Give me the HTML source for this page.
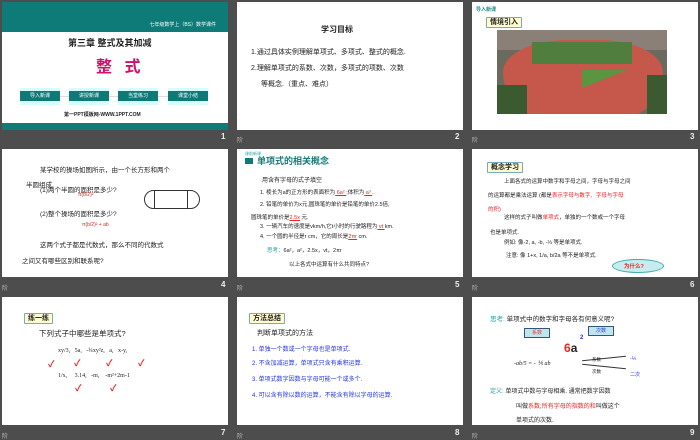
<!DOCTYPE html>
<html><head><meta charset="utf-8"><style>
*{margin:0;padding:0;box-sizing:border-box}
body{width:700px;height:438px;background:#4d4d4d;position:relative;overflow:hidden;font-family:"Liberation Sans","Noto Sans CJK SC",sans-serif;color:#222}
.s{position:absolute;width:226px;height:128px;background:#fff;overflow:hidden}
.a{position:absolute;white-space:nowrap}
.n{position:absolute;color:#eee;font-size:8px;font-weight:bold}
.ic{position:absolute;color:#bbb;font-size:6px}
.tag{position:absolute;border:1px solid #7ab;background:#eef6ff;font-size:7px;font-weight:bold;padding:0 3px;line-height:9px;border-radius:1px}
.r{color:#e22}.b{color:#2233dd}.t{color:#2a9fa0}
.btn{position:absolute;top:86px;width:40px;height:17px;background:#d8fbfb}
.btn span{position:absolute;left:0;top:3px;width:40px;height:10px;background:#0e7a77;color:#fff;font-size:5px;text-align:center;line-height:10px}
</style></head><body>

<!-- slide 1 -->
<div class="s" style="left:2px;top:2px">
 <div class="a" style="left:0;top:0;width:226px;height:30px;background:#0e7b78"></div>
 <div class="a" style="right:12px;top:19px;color:#fff;font-size:5px">七年级数学上（BS）数学课件</div>
 <div class="a" style="left:66px;top:34px;font-size:9px;font-weight:bold">第三章 整式及其加减</div>
 <div class="a" style="left:94px;top:51px;font-size:16px;font-weight:bold;color:#d0106a;letter-spacing:4px">整 式</div>
 <div class="a" style="left:50px;top:94px;width:150px;border-top:1px solid #ddd"></div>
 <div class="btn" style="left:18px"><span>导入新课</span></div>
 <div class="btn" style="left:67px"><span>讲授新课</span></div>
 <div class="btn" style="left:116px"><span>当堂练习</span></div>
 <div class="btn" style="left:166px"><span>课堂小结</span></div>
 <div class="a" style="left:62px;top:109px;font-size:5px;font-weight:bold">第一PPT模板网-WWW.1PPT.COM</div>
 <div class="a" style="left:0;top:121px;width:226px;height:7px;background:#0e7b78"></div>
</div>
<div class="n" style="left:221px;top:132px">1</div>

<!-- slide 2 -->
<div class="s" style="left:237px;top:2px">
 <div class="a" style="left:84px;top:22px;font-size:8px;font-weight:bold">学习目标</div>
 <div class="a" style="left:14px;top:45px;font-size:7px">1.通过具体实例理解单项式、多项式、整式的概念.</div>
 <div class="a" style="left:14px;top:61px;font-size:7px">2.理解单项式的系数、次数，多项式的项数、次数</div>
 <div class="a" style="left:24px;top:77px;font-size:7px">等概念.（重点、难点）</div>
</div>
<div class="ic" style="left:237px;top:135px">阶</div><div class="n" style="left:455px;top:132px">2</div>

<!-- slide 3 -->
<div class="s" style="left:472px;top:2px">
 <div class="a t" style="left:4px;top:4px;font-size:5px;font-weight:bold;color:#1a8a88">导入新课</div>
 <div class="tag" style="left:14px;top:15px;background:#fffbd0">情境引入</div>
 <div class="a" style="left:25px;top:28px;width:170px;height:84px;background:#6b6a5f;overflow:hidden">
  <div class="a" style="left:0;top:0;width:170px;height:20px;background:#8a8078"></div>
  <div class="a" style="left:6px;top:10px;width:160px;height:80px;border-radius:80px 80px 60px 60px/40px 40px 60px 60px;background:#c5584a"></div>
  <div class="a" style="left:35px;top:12px;width:100px;height:22px;background:#4f7e3e"></div>
  <div class="a" style="left:85px;top:40px;width:45px;height:18px;background:#5a9640;clip-path:polygon(0 0,100% 0,0 100%)"></div>
  <div class="a" style="left:0;top:55px;width:30px;height:30px;background:#3c5a30"></div>
  <div class="a" style="left:150px;top:45px;width:20px;height:40px;background:#3c5a30"></div>
 </div>
</div>
<div class="ic" style="left:472px;top:135px">阶</div><div class="n" style="left:690px;top:132px">3</div>

<!-- slide 4 -->
<div class="s" style="left:2px;top:149px">
 <div class="a" style="left:38px;top:15px;font-size:6.5px">某学校的操场如图所示，由一个长方形和两个</div>
 <div class="a" style="left:24px;top:30px;font-size:6.5px">半圆组成.</div>
 <div class="a" style="left:38px;top:35px;font-size:6.5px">(1)两个半圆的面积是多少?</div>
 <div class="a r" style="left:76px;top:43px;font-size:5px">π(b/2)²</div>
 <div class="a" style="left:38px;top:59px;font-size:6.5px">(2)整个操场的面积是多少?</div>
 <div class="a r" style="left:80px;top:73px;font-size:5px">π(b/2)² + ab</div>
 <div class="a" style="left:38px;top:90px;font-size:6.5px">这两个式子都是代数式，那么不同的代数式</div>
 <div class="a" style="left:20px;top:106px;font-size:6.5px">之间又有哪些区别和联系呢?</div>
 <div class="a" style="left:142px;top:41px;width:56px;height:19px;border:1px solid #333;border-radius:10px"></div>
 <div class="a" style="left:152px;top:41px;width:34px;height:19px;border-left:1px solid #333;border-right:1px solid #333"></div>
</div>
<div class="ic" style="left:2px;top:283px">阶</div><div class="n" style="left:221px;top:280px">4</div>

<!-- slide 5 -->
<div class="s" style="left:237px;top:149px">
 <div class="a t" style="left:8px;top:2px;font-size:4px">课前新课</div>
 <div class="a" style="left:8px;top:9px;width:8px;height:6px;background:#0e7b78"></div>
 <div class="a" style="left:20px;top:5px;font-size:9px;font-weight:bold;color:#157a79">单项式的相关概念</div>
 <div class="a" style="left:25px;top:26px;font-size:6px">用含有字母的式子填空</div>
 <div class="a" style="left:23px;top:39px;font-size:5.5px">1. 棱长为a的正方形的表面积为<u class="r"> 6a² </u>;体积为<u class="r"> a³ </u>.</div>
 <div class="a" style="left:23px;top:51px;font-size:5.5px">2. 铅笔的单价为x元,圆珠笔的单价是铅笔的单价2.5倍,</div>
 <div class="a" style="left:14px;top:64px;font-size:5.5px">圆珠笔的单价是<u class="r">2.5x</u> 元.</div>
 <div class="a" style="left:23px;top:73px;font-size:5.5px">3. 一辆汽车的速度是vkm/h,它t小时的行驶路程为<u class="r"> vt </u>km.</div>
 <div class="a" style="left:23px;top:83px;font-size:5.5px">4. 一个圆的半径是r cm，它的周长是<u class="r">2πr</u> cm.</div>
 <div class="a" style="left:30px;top:97px;font-size:5.5px"><span class="t">思考：</span>6a²，a²，2.5x，vt，2πr</div>
 <div class="a" style="left:52px;top:111px;font-size:5.5px">以上各式中运算有什么共同特点?</div>
</div>
<div class="ic" style="left:237px;top:283px">阶</div><div class="n" style="left:455px;top:280px">5</div>

<!-- slide 6 -->
<div class="s" style="left:472px;top:149px">
 <div class="tag" style="left:15px;top:13px;background:#fffbd0">概念学习</div>
 <div class="a" style="left:32px;top:28px;font-size:5.5px">上面各式的运算中数字和字母之间，字母与字母之间</div>
 <div class="a" style="left:16px;top:42px;font-size:5.5px">的运算都是乘法运算 (都是<span class="r">表示字母与数字、字母与字母</span></div>
 <div class="a r" style="left:16px;top:56px;font-size:5.5px">的积)</div>
 <div class="a" style="left:32px;top:64px;font-size:5.5px">这样的式子叫做<span class="r">单项式</span>，单独的一个数或一个字母</div>
 <div class="a" style="left:18px;top:79px;font-size:5.5px">也是单项式.</div>
 <div class="a" style="left:32px;top:89px;font-size:5.5px">例如: 像-2, a, -b, -⅓ 等是单项式.</div>
 <div class="a" style="left:34px;top:102px;font-size:5.5px">注意: 像 1+x, 1/a, b/2a 等不是单项式.</div>
 <div class="a" style="left:140px;top:110px;width:52px;height:14px;background:#c6ecf0;border:1px solid #4aa;border-radius:50%"></div>
 <div class="a r" style="left:152px;top:113px;font-size:5.5px;font-weight:bold">为什么?</div>
</div>
<div class="ic" style="left:472px;top:283px">阶</div><div class="n" style="left:690px;top:280px">6</div>

<!-- slide 7 -->
<div class="s" style="left:2px;top:297px">
 <div class="tag" style="left:22px;top:16px;background:#fffbd0">练一练</div>
 <div class="a" style="left:37px;top:31px;font-size:7.5px">下列式子中哪些是单项式?</div>
 <div class="a" style="left:56px;top:51px;font-family:'Liberation Serif',serif;font-size:6px">xy/3,&nbsp;&nbsp; 5a,&nbsp;&nbsp; -¾xy²z,&nbsp;&nbsp; a,&nbsp;&nbsp; x-y,</div>
 <div class="a" style="left:56px;top:76px;font-family:'Liberation Serif',serif;font-size:6px">1/x,&nbsp;&nbsp;&nbsp;&nbsp; 3.14,&nbsp;&nbsp; -m,&nbsp;&nbsp;&nbsp; -m²+2m-1</div>
 <div class="a r" style="left:46px;top:60px;font-size:9px;font-weight:bold">✓</div>
 <div class="a r" style="left:72px;top:59px;font-size:9px;font-weight:bold">✓</div>
 <div class="a r" style="left:104px;top:59px;font-size:9px;font-weight:bold">✓</div>
 <div class="a r" style="left:136px;top:59px;font-size:9px;font-weight:bold">✓</div>
 <div class="a r" style="left:73px;top:84px;font-size:9px;font-weight:bold">✓</div>
 <div class="a r" style="left:108px;top:84px;font-size:9px;font-weight:bold">✓</div>
</div>
<div class="ic" style="left:2px;top:431px">阶</div><div class="n" style="left:221px;top:428px">7</div>

<!-- slide 8 -->
<div class="s" style="left:237px;top:297px">
 <div class="tag" style="left:12px;top:16px;background:#fffbd0">方法总结</div>
 <div class="a" style="left:20px;top:31px;font-size:7px">判断单项式的方法</div>
 <div class="a b" style="left:15px;top:47px;font-size:6px">1. 单独一个数或一个字母也是单项式.</div>
 <div class="a b" style="left:15px;top:61px;font-size:6px">2. 不含加减运算，单项式只含有乘积运算.</div>
 <div class="a b" style="left:15px;top:77px;font-size:6px">3. 单项式数字因数与字母可能一个或多个.</div>
 <div class="a b" style="left:15px;top:93px;font-size:6px">4. 可以含有除以数的运算，不能含有除以字母的运算.</div>
</div>
<div class="ic" style="left:237px;top:431px">阶</div><div class="n" style="left:455px;top:428px">8</div>

<!-- slide 9 -->
<div class="s" style="left:472px;top:297px">
 <div class="a" style="left:18px;top:16px;font-size:6.5px"><span class="t">思考:</span> 单项式中的数字和字母各有何意义呢?</div>
 <div class="a" style="left:52px;top:31px;width:26px;height:10px;background:#bfe6ee;border:1px solid #357;font-size:5px;color:#e33;text-align:center;line-height:9px">系数</div>
 <div class="a" style="left:116px;top:29px;width:26px;height:10px;background:#bfe6ee;border:1px solid #357;font-size:5px;color:#33d;text-align:center;line-height:9px">次数</div>
 <div class="a" style="left:92px;top:44px;font-size:12px;font-weight:bold"><span style="color:#e22">6</span>a</div>
 <div class="a b" style="left:108px;top:38px;font-size:6px;font-weight:bold">2</div>
 <div class="a" style="left:42px;top:63px;font-family:'Liberation Serif',serif;font-size:6px;font-style:italic">-ab/5 = - ⅕ ab</div>
 <div class="a" style="left:110px;top:61px;width:44px;border-top:1px solid #333;transform:rotate(-6deg)"></div>
 <div class="a" style="left:110px;top:69px;width:44px;border-top:1px solid #333;transform:rotate(6deg)"></div>
 <div class="a" style="left:120px;top:60px;font-size:4.5px">系数</div>
 <div class="a" style="left:120px;top:72px;font-size:4.5px">次数</div>
 <div class="a b" style="left:158px;top:59px;font-size:5px">-⅕</div>
 <div class="a b" style="left:158px;top:74px;font-size:5px">二次</div>
 <div class="a" style="left:18px;top:89px;font-size:6px"><span class="t">定义:</span> 单项式中数与字母相乘. 通常把数字因数</div>
 <div class="a" style="left:44px;top:104px;font-size:6px">叫做<span class="r">系数</span>;<span class="r">所有字母的指数的和</span>叫做这个</div>
 <div class="a" style="left:44px;top:118px;font-size:6px">单项式的次数.</div>
</div>
<div class="ic" style="left:472px;top:431px">阶</div><div class="n" style="left:690px;top:428px">9</div>

</body></html>
